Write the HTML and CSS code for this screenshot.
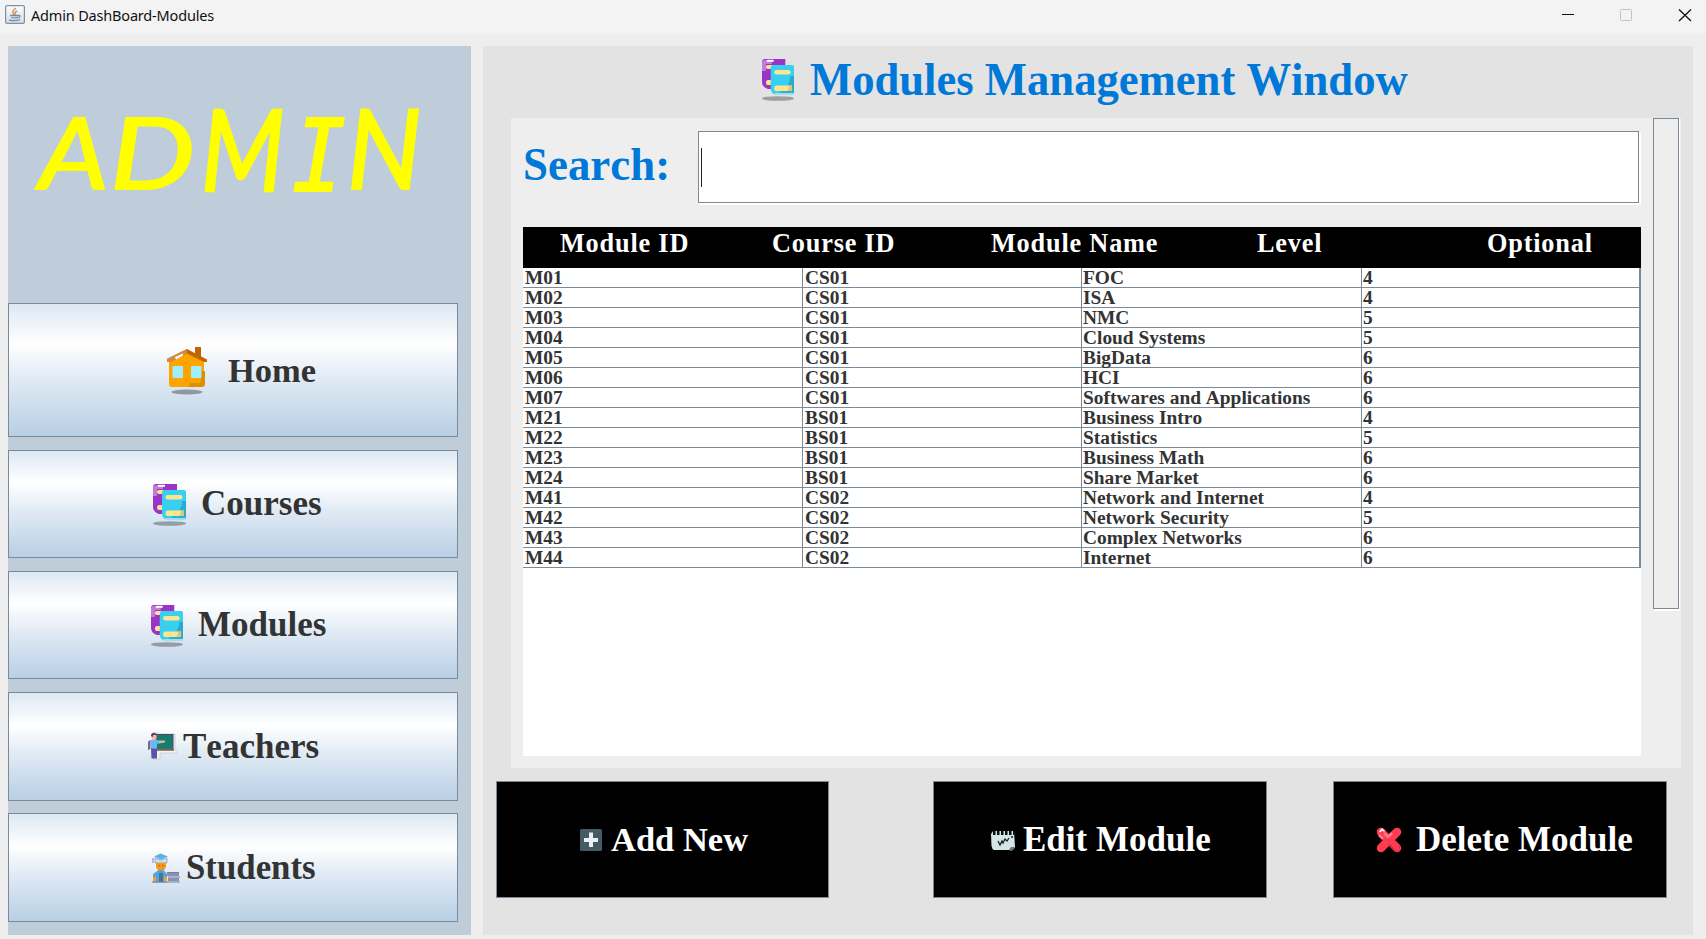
FILE: index.html
```html
<!DOCTYPE html>
<html lang="en">
<head>
<meta charset="utf-8">
<title>Admin DashBoard-Modules</title>
<link rel="stylesheet" href="styles.css">
</head>
<body>
<svg width="0" height="0" class="defs">
  <symbol id="books" viewBox="0 0 33 42" preserveAspectRatio="none">
    <ellipse cx="16.500" cy="39.500" rx="16.500" ry="2.300" fill="#000" opacity=".3"/>
    <path d="M3 0H24V6H12V30H6Q0 28 0 23V3Q0 0 3 0Z" fill="#9b34c4"/>
    <path d="M4 1H10V5H4V12H0V3Q0 1 4 1Z" fill="#c07bdc"/>
    <rect x="5" y=".8" width="7" height="2" fill="#fff"/>
    <path d="M6 6H11V10H6Q4 10 4 8Q4 6 6 6ZM6 21H10V26H6Q4 26 4 23.500Q4 21 6 21Z" fill="#fde590"/>
    <path d="M12 6H31Q33 6 33 8V35H12Q9 33 9 30V9Q9 6 12 6Z" fill="#38d0f1"/>
    <path d="M33 17V33H27V24Q29 23 29 17Z" fill="#27acd0"/>
    <rect x="12.500" y="11" width="17" height="4.500" rx="2.200" fill="#fde590"/>
    <path d="M15 26.500H31V32H14Q12.500 31.500 12.500 29.500Q12.500 26.500 15 26.500Z" fill="#fde590"/>
    <path d="M28 26.500H31V32H26Q28 30 28 26.500Z" fill="#dfc47c"/>
    <path d="M19 32H33V35H19Z" fill="#25b5d3"/><path d="M13 34H33V36H13Z" fill="#a1deec"/>
  </symbol>
</svg>

<header class="titlebar">
  <svg class="java" viewBox="0 0 20 19">
    <defs><linearGradient id="jv" x1="0" y1="0" x2="0" y2="1"><stop offset="0" stop-color="#fdfdfd"/><stop offset="1" stop-color="#d6dde3"/></linearGradient></defs>
    <rect x=".6" y=".6" width="18.800" height="17.800" rx="1.500" fill="url(#jv)" stroke="#7b93a8" stroke-width="1.200"/>
    <path d="M11 3Q6 6 9 10M12 6Q9 7.500 10.500 10" fill="none" stroke="#e08a4e" stroke-width="1.400"/>
    <path d="M5 10.500H13.500M6 12.500Q9.500 13.500 13 12.300M13.500 10.500Q16.500 10.500 13.500 13M4 14.800Q9 16.500 15 14.600" fill="none" stroke="#6d8da8" stroke-width="1.300"/>
  </svg>
  <span class="caption">Admin DashBoard-Modules</span>
  <svg class="controls" width="140" height="34" viewBox="0 0 140 34">
    <path d="M0 14.500H12" stroke="#111" stroke-width="1"/>
    <rect x="58.500" y="9.500" width="11" height="11" rx="1" fill="none" stroke="#c4c4c4"/>
    <path d="M117 9.500L129 21M129 9.500L117 21" stroke="#111" stroke-width="1.300"/>
  </svg>
</header>

<div class="frame">
  <nav class="sidebar">
    <h1 class="brand"><span class="a">A</span><span class="d">D</span><span class="m">M</span><span class="i">I</span><span class="n">N</span></h1>
    <button class="nav home">
      <svg width="40" height="48" viewBox="0 0 40 48">
        <ellipse cx="20" cy="45" rx="15.500" ry="2.500" fill="#000" opacity=".33"/>
        <path d="M28 0H34V12H28Z" fill="#c06500"/>
        <path d="M20 5L37 14V38Q37 40 35 40H5Q2 40 2 37V14Z" fill="#ffa300"/>
        <path d="M38 24V37Q38 40 35 40H22V36H32Q34 36 34 33V24Z" fill="#dc9000"/>
        <path d="M20 2L40 12.500V15H37L20 6.500L3 15H0V12Z" fill="#c06500"/>
        <path d="M20 2L0 12V15H3L20 6.500Z" fill="#d08a46"/>
        <path d="M8 10L16 6.500V8.500L9 12.500Z" fill="#fff"/>
        <rect x="5.500" y="19" width="10.500" height="12" rx="1" fill="#9eeeff"/><rect x="24" y="19" width="10.500" height="12" rx="1" fill="#9eeeff"/>
      </svg><span>Home</span></button>
    <button class="nav courses"><svg width="33" height="42"><use href="#books"/></svg><span>Courses</span></button>
    <button class="nav modules"><svg width="32" height="42"><use href="#books"/></svg><span>Modules</span></button>
    <button class="nav teachers">
      <svg width="29" height="29" viewBox="0 0 29 29">
        <path d="M4 1L9 0L11 2H27V18H29V21H12V27H5Z" fill="#f3f3f5" stroke="#c9c9cf" stroke-width=".8"/>
        <rect x="8" y="2.500" width="17" height="15" fill="#187c6c" stroke="#4c4568"/>
        <path d="M8 17.800H26" stroke="#806657" stroke-width="2"/>
        <path d="M2 8H9L12 9V11L9 12V17H3Z" fill="#69b7f5"/>
        <path d="M11 8.500L17 8.500V10.500L11 11.500Z" fill="#d9b59a"/>
        <path d="M0 10L2 8L2.500 17L0 18Z" fill="#76648b"/>
        <path d="M3 16.500H9V26.500H3.500Z" fill="#5955a2"/>
        <rect x="3.500" y="2" width="5" height="6" rx="2" fill="#f5b9a4"/><path d="M3 4Q3 1 6 1Q9 1 9 3L5 3V5Z" fill="#4d3c60"/>
      </svg><span>Teachers</span></button>
    <button class="nav students">
      <svg width="28" height="30" viewBox="0 0 28 30">
        <path d="M2 3.500L8.500 .5L16 3.500L9 6.500Z" fill="#55b2e6"/>
        <path d="M1 5V10" stroke="#7d83ac"/><path d="M3 5L9 7L15 5V10H3Z" fill="#d3deec" stroke="#7e91b4" stroke-width=".7"/>
        <path d="M4 10H14V14Q12 18 9 18.500Q5 17 4 14Z" fill="#f49a1c"/><circle cx="7" cy="12.500" r=".7" fill="#a85222"/><circle cx="11" cy="12.500" r=".7" fill="#a85222"/>
        <path d="M6.500 17H11.500L15 21V29.500H1V21Z" fill="#53a6d9"/>
        <path d="M7 20H11V29H7Z" fill="#566e8f"/><path d="M1 24H4V29H1ZM12 24H15V29H12Z" fill="#f3a032"/>
        <path d="M15 20H27V23H15ZM16 25H27V28H16Z" fill="#8d8fac"/><path d="M15 19.500H27M16 24H28M0 29H28" stroke="#6a80ae"/>
      </svg><span>Students</span></button>
  </nav>

  <main class="panel">
    <h2 class="heading"><svg width="32" height="42"><use href="#books"/></svg><span>Modules Management Window</span></h2>
    <section class="content">
      <div class="left">
        <div class="search"><label for="q">Search:</label><div class="field" id="q"><i class="caret"></i></div></div>
        <div class="table">
          <div class="thead"><span>Module ID</span><span>Course ID</span><span>Module Name</span><span>Level</span><span>Optional</span></div>
          <div class="row"><span>M01</span><span>CS01</span><span>FOC</span><span>4</span></div>
          <div class="row"><span>M02</span><span>CS01</span><span>ISA</span><span>4</span></div>
          <div class="row"><span>M03</span><span>CS01</span><span>NMC</span><span>5</span></div>
          <div class="row"><span>M04</span><span>CS01</span><span>Cloud Systems</span><span>5</span></div>
          <div class="row"><span>M05</span><span>CS01</span><span>BigData</span><span>6</span></div>
          <div class="row"><span>M06</span><span>CS01</span><span>HCI</span><span>6</span></div>
          <div class="row"><span>M07</span><span>CS01</span><span>Softwares and Applications</span><span>6</span></div>
          <div class="row"><span>M21</span><span>BS01</span><span>Business Intro</span><span>4</span></div>
          <div class="row"><span>M22</span><span>BS01</span><span>Statistics</span><span>5</span></div>
          <div class="row"><span>M23</span><span>BS01</span><span>Business Math</span><span>6</span></div>
          <div class="row"><span>M24</span><span>BS01</span><span>Share Market</span><span>6</span></div>
          <div class="row"><span>M41</span><span>CS02</span><span>Network and Internet</span><span>4</span></div>
          <div class="row"><span>M42</span><span>CS02</span><span>Network Security</span><span>5</span></div>
          <div class="row"><span>M43</span><span>CS02</span><span>Complex Networks</span><span>6</span></div>
          <div class="row"><span>M44</span><span>CS02</span><span>Internet</span><span>6</span></div>
        </div>
      </div>
      <div class="scroller"></div>
    </section>
    <footer class="actions">
      <button class="act add">
        <svg width="22" height="22" viewBox="0 0 22 22"><rect width="22" height="22" rx="1.500" fill="#465a65"/><path d="M9 3.500H13V9H18V13H13V18H9V13H4V9H9Z" fill="#eceff1"/></svg><span>Add New</span></button>
      <button class="act edit">
        <svg width="24" height="22" viewBox="0 0 24 22"><path d="M2 2H23L24 18Q22 22 18 21H3Q1 20 .5 17L0 5Z" fill="#d5e5e5"/><path d="M2 4H23" stroke="#050f10" stroke-width="4" stroke-dasharray="2.500 1.500"/><path d="M7 12L9 16L11 12L12 14L14 10L16 12L18 9M20 8H22" fill="none" stroke="#172222" stroke-width="1.300"/><path d="M18 21L20 18L24 18L21 22Z" fill="#657676"/></svg><span>Edit Module</span></button>
      <button class="act delete">
        <svg width="26" height="26" viewBox="0 0 26 26"><path d="M5 5L21 21M21 5L5 21" stroke="#ff3b52" stroke-width="8.500" stroke-linecap="round"/><path d="M20 12Q16 13 20 18L24 19Q25 23 20 25L12 18Q17 17 20 12Z" fill="#cf2b42"/><path d="M15 14L21 21" stroke="#ff3b52" stroke-width="5" stroke-linecap="round"/><path d="M3 8L7 12M8 6L12 10L16 6" fill="none" stroke="#ff7b8b" stroke-width="2.500"/><path d="M3.500 5L6 1.500L8.500 4L6 3.500Z" fill="#fff" stroke="#fff"/></svg><span>Delete Module</span></button>
    </footer>
  </main>
</div>
</body>
</html>
```

FILE: styles.css
```css
* { box-sizing: border-box; }
body {
  margin: 0;
  width: 1706px;
  height: 939px;
  overflow: hidden;
  background: #eee;
  font-family: "Liberation Serif", "Times New Roman", serif;
  font-weight: bold;
  font-kerning: none;
  color: #333;
}
.defs { position: absolute; }
svg { flex: none; display: block; }
span { white-space: nowrap; }
button { font: inherit; font-kerning: none; margin: 0; padding: 0; border-radius: 0; text-align: left; }

.titlebar {
  height: 34px;
  background: #f3f3f3;
  display: flex;
  padding-left: 5px;
}
.java { width: 20px; height: 19px; margin-top: 5px; }
.caption {
  margin-left: 6px;
  font: 14.5px/31px "Noto Sans", "Open Sans", sans-serif;
  letter-spacing: -0.18px;
  color: #111;
}
.controls { margin-left: auto; margin-right: 4px; }

.frame {
  display: grid;
  grid-template-columns: 463px 1210px;
  gap: 12px;
  height: 901px;
  padding: 12px 0 0 8px;
}

/* Sidebar */
.sidebar {
  height: 889px;
  background: #bfcdda;
  display: grid;
  grid-template-columns: 450px;
  grid-template-rows: 244px 134px 108px 108px 109px 109px;
  row-gap: 13px;
}
.brand {
  margin: 0;
  padding: 44px 0 0 28px;
  display: flex;
  height: 244px;
  font: italic 100px/120px Lato, sans-serif;
  color: #ff0;
  -webkit-text-stroke: 2px #ff0;
}
.brand span { display: block; height: 120px; transform-origin: 0 84%; }
.brand .a { width: 76px; transform: translateX(3px) scaleX(1.1); }
.brand .d { width: 84px; transform: translateX(-2px) scaleX(1.2); }
.brand .m { width: 90px; transform: translate(5px, 2px) scale(.97, 1.13); }
.brand .i { width: 66px; font-family: "DejaVu Sans Mono", monospace; transform: translate(6px, 7px) scaleX(.9); }
.brand .n { transform: translateX(-5px) scale(1.05, 1.1); }
.nav {
  border: 1px solid #7a8a99;
  background: linear-gradient(#dde8f3 0%, #fff 30%, #dde8f3 60%, #b8cfe5 100%);
  color: #333;
  font-size: 35px;
  display: flex;
  align-items: center;
}
.home { padding-left: 158px; gap: 21px; font-size: 34.5px; }
.courses { padding-left: 144px; gap: 15px; }
.modules { padding-left: 142px; gap: 15px; }
.home svg, .courses svg, .modules svg { margin-top: 2px; }
.teachers { padding-left: 139px; gap: 6px; }
.students { padding-left: 143px; gap: 6px; font-size: 34.8px; }
.sidebar .students { margin-top: -1px; height: 109px; }

/* Main panel */
.panel { height: 889px; background: #e3e3e3; }
.heading {
  margin: 0;
  height: 72px;
  padding: 0 0 5px 279px;
  display: flex;
  align-items: center;
  gap: 16px;
  color: #0078d7;
  font-size: 46.5px;
}
.heading span { transform: scaleX(.96); transform-origin: 0 50%; }
.content {
  margin-left: 28px;
  width: 1170px;
  height: 650px;
  padding-left: 12px;
  background: #eee;
  display: flex;
  gap: 12px;
}
.left { width: 1118px; padding-top: 13px; }
.search { display: flex; height: 96px; }
.search label {
  width: 175px;
  font-size: 47px;
  line-height: 66px;
  color: #0078d7;
  transform: scaleX(.955);
  transform-origin: 0 50%;
}
.field {
  width: 941px;
  height: 72px;
  border: 1px solid #7a8a99;
  background: #fff;
  box-shadow: 1px 1px #fff, 2px 2px #fff;
}
.caret { display: block; width: 1px; height: 39px; margin: 16px 0 0 2px; background: #222; }
.table { height: 529px; background: #fff; }
.thead {
  height: 41px;
  padding-left: 37px;
  display: grid;
  grid-template-columns: 212px 219px 266px 230px auto;
  background: #000;
  color: #fff;
  font-size: 26.3px;
  line-height: 34px;
  letter-spacing: .8px;
}
.row {
  height: 20px;
  display: grid;
  grid-template-columns: 280px 279px 280px 278px;
  border-bottom: 1px solid #7a8a99;
  border-right: 1px solid #7a8a99;
  font-size: 19.4px;
  line-height: 20px;
}
.row span { border-right: 1px solid #7a8a99; padding-left: 2px; height: 19px; }
.row span:nth-child(n+3) { padding-left: 1px; }
.scroller {
  width: 26px;
  height: 491px;
  border: 1px solid #7a8a99;
  box-shadow: 1px 1px #fff, 1px 2px #fff;
}

.actions { display: flex; padding: 13px 0 0 13px; }
.act {
  width: 334px;
  height: 117px;
  border: 1px solid #7a8a99;
  background: #000;
  color: #fff;
  font-size: 35px;
  display: flex;
  align-items: center;
}
.act.add { width: 333px; padding-left: 83px; gap: 9px; margin-right: 104px; font-size: 34.5px; }
.edit { padding-left: 57px; gap: 8px; margin-right: 66px; }
.delete { padding-left: 42px; gap: 14px; }
```
